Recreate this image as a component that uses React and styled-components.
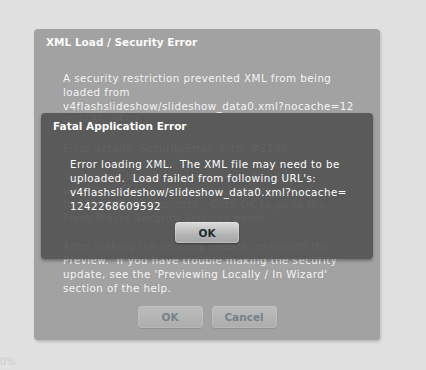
import React from "react";
import styled, { createGlobalStyle } from "styled-components";

const GlobalStyle = createGlobalStyle`
  html, body {
    margin: 0;
    padding: 0;
    background: #e1e1e1;
  }
  body {
    font-family: "DejaVu Sans", Verdana, sans-serif;
  }
`;

const Page = styled.div`
  position: relative;
  width: 426px;
  height: 370px;
  padding: 29px 0 0 34px;
  box-sizing: border-box;
  overflow: hidden;
`;

const Dialog = styled.div`
  position: relative;
  box-sizing: border-box;
  width: 346px;
  height: 311px;
  padding: 6px 0 0 12px;
  background: #a2a2a2;
  border-radius: 4px;
  box-shadow: 1px 2px 3px rgba(0, 0, 0, 0.18);
  display: flex;
  flex-direction: column;
`;

const Title = styled.div`
  font-size: 10.5px;
  font-weight: bold;
  line-height: 14px;
  color: #fafafa;
`;

const Body = styled.div`
  margin: ${(p) => p.$top}px 0 0 ${(p) => p.$left}px;
  font-size: 10.3px;
  letter-spacing: 0.45px;
  line-height: 14px;
  color: ${(p) => p.$color};
  white-space: pre;
`;

const Buttons = styled.div`
  display: flex;
  justify-content: center;
  gap: 9px;
  margin: 11px 0 0 -12px;
`;

const Button = styled.button`
  width: ${(p) => p.$w}px;
  height: ${(p) => p.$h}px;
  padding: 0;
  border: none;
  border-radius: 4px;
  font-family: "DejaVu Sans", Verdana, sans-serif;
  font-size: 10.5px;
  font-weight: bold;
  color: ${(p) => (p.$muted ? "#73828b" : "#1c2b32")};
  background: ${(p) =>
    p.$muted
      ? "linear-gradient(#bcbcbc, #adadad)"
      : "linear-gradient(#dcdcdc, #b4b4b4 60%, #a6a6a6)"};
  box-shadow: ${(p) =>
    p.$muted
      ? "inset 0 0 0 1px rgba(255,255,255,0.12), 0 1px 1px rgba(0,0,0,0.1)"
      : "inset 0 0 0 1px rgba(255,255,255,0.25), 0 1px 2px rgba(0,0,0,0.35)"};
`;

const Alert = styled.div`
  position: absolute;
  left: 7px;
  top: 84px;
  width: 332px;
  height: 146px;
  box-sizing: border-box;
  padding: 6px 0 0 12px;
  background: rgba(84, 84, 84, 0.92);
  border-radius: 4px;
  box-shadow: 0 2px 3px rgba(0, 0, 0, 0.3);
  display: flex;
  flex-direction: column;
`;

const AlertButtons = styled.div`
  display: flex;
  justify-content: center;
  margin: 9px 0 0 -12px;
`;

const Progress = styled.div`
  position: absolute;
  left: 0;
  bottom: 3px;
  font-size: 10px;
  color: #cdcdcd;
`;

const backLines = [
  "A security restriction prevented XML from being",
  "loaded from",
  "v4flashslideshow/slideshow_data0.xml?nocache=12",
  "42268609592",
  "",
  "Error details: SecurityError: Error #2148",
  "",
  "To preview locally, you may need to add the",
  "working folder to the trusted locations for",
  "the Flash Player content.  Click OK to go to the",
  "Flash Player Security Settings panel.",
  "",
  "After making the security update, re-launch the",
  "Preview.  If you have trouble making the security",
  "update, see the 'Previewing Locally / In Wizard'",
  "section of the help.",
];

const alertLines = [
  "Error loading XML.  The XML file may need to be",
  "uploaded.  Load failed from following URL's:",
  "v4flashslideshow/slideshow_data0.xml?nocache=",
  "1242268609592",
];

function Lines({ lines }) {
  return lines.map((line, i) => <div key={i}>{line || "\u00a0"}</div>);
}

export default function App() {
  return (
    <>
      <GlobalStyle />
      <Page>
        <Dialog>
          <Title>XML Load / Security Error</Title>
          <Body $top={22} $left={17} $color="#f4f4f4">
            <Lines lines={backLines} />
          </Body>
          <Buttons>
            <Button $w={65} $h={22} $muted>OK</Button>
            <Button $w={65} $h={22} $muted>Cancel</Button>
          </Buttons>
          <Alert>
            <Title>Fatal Application Error</Title>
            <Body $top={24} $left={17} $color="#ffffff">
              <Lines lines={alertLines} />
            </Body>
            <AlertButtons>
              <Button $w={64} $h={21}>OK</Button>
            </AlertButtons>
          </Alert>
        </Dialog>
        <Progress>0%</Progress>
      </Page>
    </>
  );
}
